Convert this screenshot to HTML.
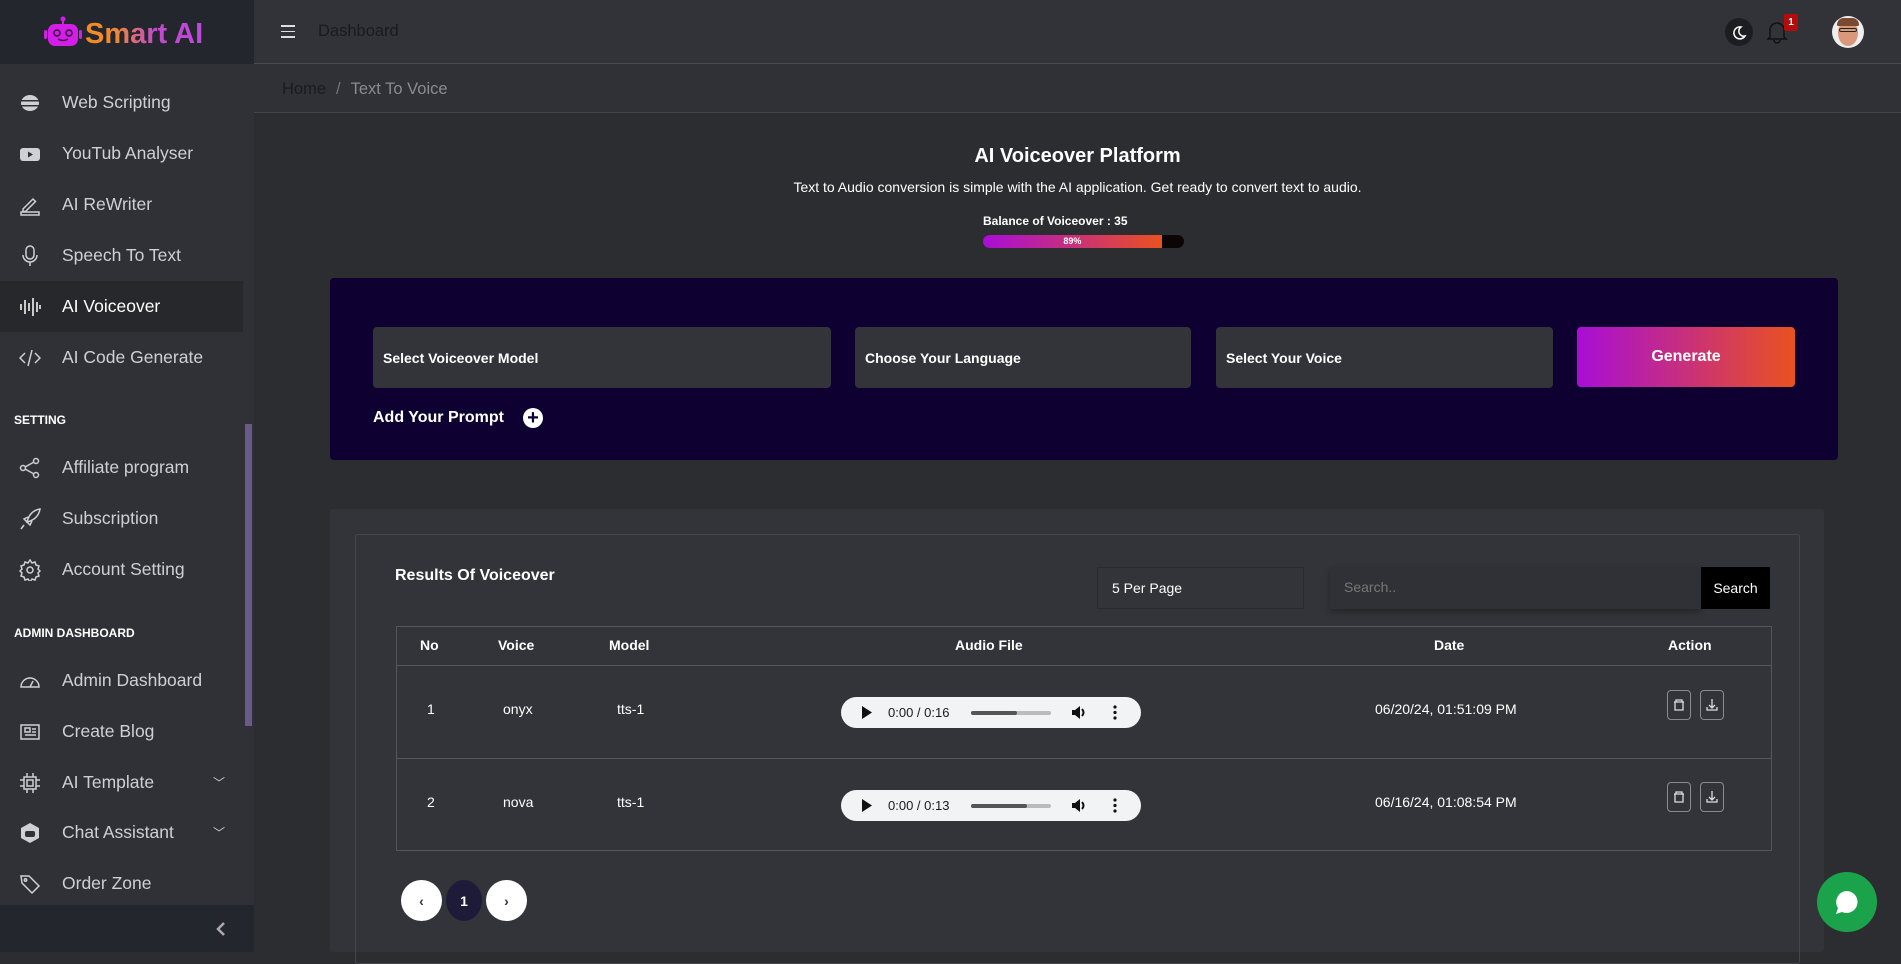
<!DOCTYPE html>
<html><head><meta charset="utf-8"><style>
*{box-sizing:border-box;margin:0;padding:0}
body{width:1901px;height:952px;overflow:hidden;background:#2c2d31;font-family:"Liberation Sans",sans-serif;color:#fff;position:relative}
.abs{position:absolute;white-space:nowrap}
.side{left:0;top:0;width:254px;height:952px;background:#303136}
.logo{left:0;top:0;width:254px;height:64px;background:#24262e}
.mi{position:absolute;left:0;width:243px;height:51px;display:flex;align-items:center;font-size:17.5px;color:#cfd0d4;white-space:nowrap}
.mi svg{position:absolute;left:19px;width:22px;height:22px}
.mi span{position:absolute;left:62px}
.sh{position:absolute;left:14px;font-size:12px;font-weight:bold;color:#fff}
.hdr{left:254px;top:0;right:0;height:64px;background:#323338;border-bottom:1px solid #4a4b50}
.bc{left:254px;top:64px;right:0;height:49px;background:#303136;border-bottom:1px solid #44454a}
.inp{position:absolute;top:327px;height:61px;background:#333439;border-radius:4px;font-size:14px;font-weight:bold;display:flex;align-items:center;padding-left:10px}
.audio{position:absolute;left:841px;width:300px;height:31px;background:#f1f3f4;border-radius:16px;color:#1a1a1a;font-size:13px}
.ab{position:absolute;width:24px;height:30px;border:1px solid #8a8b90;border-radius:4px}
.pg{position:absolute;top:880px;width:41px;height:41px;border-radius:50%;background:#fff;color:#333;display:flex;align-items:center;justify-content:center;font-size:14px;font-weight:bold}
</style></head><body>
<div class="abs side"></div>
<div class="abs logo">
<svg class="abs" style="left:43px;top:16px" width="40" height="32" viewBox="0 0 40 32"><circle cx="20" cy="3" r="2.5" fill="#d21ee6"/><rect x="19" y="3" width="2" height="6" fill="#d21ee6"/><rect x="5" y="8" width="30" height="22" rx="7" fill="#d21ee6"/><rect x="1" y="14" width="3" height="9" rx="1.5" fill="#d21ee6"/><rect x="36" y="14" width="3" height="9" rx="1.5" fill="#d21ee6"/><circle cx="14" cy="17" r="3" fill="none" stroke="#3a1040" stroke-width="1.5"/><circle cx="26" cy="17" r="3" fill="none" stroke="#3a1040" stroke-width="1.5"/><path d="M15 23q5 3 10 0" stroke="#3a1040" stroke-width="1.5" fill="none"/></svg>
<div class="abs" style="left:85px;top:18px;font-size:29px;line-height:32px;font-weight:bold;background:linear-gradient(90deg,#f68a24 0%,#f08a30 25%,#c24ad0 60%,#b94ad8 100%);-webkit-background-clip:text;background-clip:text;color:transparent">Smart AI</div>
</div>
<div class="mi" style="top:77px"><svg viewBox="0 0 22 22"><ellipse cx="11" cy="11" rx="9" ry="8" fill="#cfd0d4"/><rect x="2" y="8" width="18" height="1.5" fill="#303136"/><rect x="2" y="13" width="18" height="1.5" fill="#303136"/></svg><span>Web Scripting</span></div>
<div class="mi" style="top:128px"><svg viewBox="0 0 22 22"><rect x="1" y="5" width="20" height="13" rx="3" fill="#cfd0d4"/><path d="M9 8.5l5 3-5 3z" fill="#303136"/></svg><span>YouTub Analyser</span></div>
<div class="mi" style="top:179px"><svg viewBox="0 0 22 22" fill="none" stroke="#cfd0d4" stroke-width="1.5"><path d="M4 15l10-10 2.5 2.5-10 10H4z"/><rect x="2" y="18" width="18" height="3"/></svg><span>AI ReWriter</span></div>
<div class="mi" style="top:230px"><svg viewBox="0 0 22 22" fill="none" stroke="#cfd0d4" stroke-width="1.5"><rect x="7" y="1" width="8" height="13" rx="4"/><path d="M4 10a7 7 0 0014 0M11 17v4"/></svg><span>Speech To Text</span></div>
<div class="mi" style="top:281px;background:#27282c;color:#fff"><svg viewBox="0 0 22 22" stroke="#fff" stroke-width="1.5"><path d="M2 8v6M6 4v14M10 7v8M14 2v18M18 6v10M21 9v4"/></svg><span>AI Voiceover</span></div>
<div class="mi" style="top:332px"><svg viewBox="0 0 22 22" fill="none" stroke="#cfd0d4" stroke-width="1.5"><path d="M6 6l-5 5 5 5M16 6l5 5-5 5M13 3l-4 16"/></svg><span>AI Code Generate</span></div>
<div class="sh" style="top:413px">SETTING</div>
<div class="mi" style="top:442px"><svg viewBox="0 0 22 22" fill="none" stroke="#cfd0d4" stroke-width="1.5"><circle cx="4" cy="11" r="2.5"/><circle cx="17" cy="4" r="2.5"/><circle cx="17" cy="18" r="2.5"/><path d="M6 10l9-5M6 12l9 5"/></svg><span>Affiliate program</span></div>
<div class="mi" style="top:493px"><svg viewBox="0 0 22 22" fill="none" stroke="#cfd0d4" stroke-width="1.5"><path d="M8 14c2-8 7-12 13-13-1 6-5 11-13 13zM8 14l-3-3 4-2M8 14l3 3 2-4M5 17l-3 4"/></svg><span>Subscription</span></div>
<div class="mi" style="top:544px"><svg viewBox="0 0 22 22" fill="none" stroke="#cfd0d4" stroke-width="1.5"><circle cx="11" cy="11" r="3"/><path d="M11 1l2 3 3-1 1 3 3 1-1 3 2 2-2 2 1 3-3 1-1 3-3-1-2 3-2-3-3 1-1-3-3-1 1-3-2-2 2-2-1-3 3-1 1-3 3 1z"/></svg><span>Account Setting</span></div>
<div class="sh" style="top:626px">ADMIN DASHBOARD</div>
<div class="mi" style="top:655px"><svg viewBox="0 0 22 22" fill="none" stroke="#cfd0d4" stroke-width="1.5"><path d="M2 17a9 9 0 1118 0zM11 17l3-6"/></svg><span>Admin Dashboard</span></div>
<div class="mi" style="top:706px"><svg viewBox="0 0 22 22" fill="none" stroke="#cfd0d4" stroke-width="1.5"><rect x="2" y="4" width="18" height="14"/><rect x="6" y="7" width="5" height="4"/><path d="M13 8h4M13 11h4M6 14h11"/></svg><span>Create Blog</span></div>
<div class="mi" style="top:757px"><svg viewBox="0 0 22 22" fill="none" stroke="#cfd0d4" stroke-width="1.5"><rect x="5" y="5" width="12" height="12"/><rect x="8" y="8" width="6" height="6"/><path d="M8 1v4M14 1v4M8 17v4M14 17v4M1 8h4M1 14h4M17 8h4M17 14h4"/></svg><span>AI Template</span><span style="left:213px;font-size:12px">﹀</span></div>
<div class="mi" style="top:807px"><svg viewBox="0 0 22 22"><path d="M11 1l9 5v10l-9 5-9-5V6z" fill="#cfd0d4"/><rect x="6" y="9" width="10" height="6" rx="2" fill="#303136"/></svg><span>Chat Assistant</span><span style="left:213px;font-size:12px">﹀</span></div>
<div class="mi" style="top:858px"><svg viewBox="0 0 22 22" fill="none" stroke="#cfd0d4" stroke-width="1.5"><path d="M2 3h8l10 10-7 7L3 10z"/><circle cx="6.5" cy="7" r="1.2"/></svg><span>Order Zone</span></div>
<div class="abs" style="left:245px;top:424px;width:7px;height:302px;background:#6a5a8a"></div>
<div class="abs" style="left:0;top:905px;width:254px;height:47px;background:#24262e"><svg class="abs" style="left:214px;top:16px" width="14" height="16" viewBox="0 0 14 16"><path d="M10 2L4 8l6 6" fill="none" stroke="#aaa" stroke-width="2.5"/></svg></div>

<div class="abs hdr">
<div class="abs" style="left:27px;top:25px;width:14px"><div style="height:1.5px;background:#ddd;margin-bottom:4px"></div><div style="height:1.5px;background:#ddd;margin-bottom:4px"></div><div style="height:1.5px;background:#ddd"></div></div>
<div class="abs" style="left:64px;top:22px;font-size:16.5px;color:#1a1a22">Dashboard</div>
<div class="abs" style="left:1471px;top:18px;width:28px;height:28px;border-radius:50%;background:#1c1d20"><svg width="28" height="28" viewBox="0 0 28 28"><path d="M16 9a6 6 0 104 9 5 5 0 01-4-9z" fill="none" stroke="#fff" stroke-width="1.5"/></svg></div>
<svg class="abs" style="left:1512px;top:20px" width="22" height="24" viewBox="0 0 22 24" fill="none" stroke="#111" stroke-width="1.5"><path d="M4 17V10a7 7 0 0114 0v7l2 2H2zM8 20a3 3 0 006 0"/></svg>
<div class="abs" style="left:1530px;top:14px;width:14px;height:17px;background:#b30c0c;border-radius:2px;font-size:10px;font-weight:bold;text-align:center;line-height:17px">1</div>
<div class="abs" style="left:1578px;top:16px;width:32px;height:32px;border-radius:50%;background:#eee;overflow:hidden"><div style="position:absolute;left:6px;top:4px;width:20px;height:26px;border-radius:50%;background:#d9987a"></div><div style="position:absolute;left:5px;top:2px;width:22px;height:8px;border-radius:10px 10px 2px 2px;background:#7a4a30"></div><div style="position:absolute;left:7px;top:12px;width:18px;height:4px;border:1.5px solid #222;border-radius:2px"></div></div>
</div>
<div class="abs bc"><div class="abs" style="left:28px;top:16px;font-size:16.5px"><span style="color:#1a1a22">Home</span><span style="color:#777;margin:0 10px">/</span><span style="color:#8a8b90">Text To Voice</span></div></div>

<div class="abs" style="left:254px;right:0;top:145px;text-align:center;font-size:20px;font-weight:bold">AI Voiceover Platform</div>
<div class="abs" style="left:254px;right:0;top:179px;text-align:center;font-size:14px">Text to Audio conversion is simple with the AI application. Get ready to convert text to audio.</div>
<div class="abs" style="left:983px;top:214px;font-size:12px;font-weight:bold">Balance of Voiceover : 35</div>
<div class="abs" style="left:983px;top:235px;width:201px;height:13px;border-radius:7px;background:#0c0505;overflow:hidden"><div style="width:89%;height:100%;background:linear-gradient(90deg,#a80ed6,#e9521f);font-size:9px;font-weight:bold;text-align:center;line-height:13px">89%</div></div>

<div class="abs" style="left:330px;top:278px;width:1508px;height:182px;background:#0e0030;border-radius:4px"></div>
<div class="inp" style="left:373px;width:458px">Select Voiceover Model</div>
<div class="inp" style="left:855px;width:336px">Choose Your Language</div>
<div class="inp" style="left:1216px;width:337px">Select Your Voice</div>
<div class="abs" style="left:1577px;top:327px;width:218px;height:60px;border-radius:4px;background:linear-gradient(90deg,#a80ed6,#e9521f);font-size:16px;font-weight:bold;text-align:center;line-height:60px">Generate</div>
<div class="abs" style="left:373px;top:409px;font-size:16px;font-weight:bold">Add Your Prompt</div>
<div class="abs" style="left:523px;top:408px;width:20px;height:20px;border-radius:50%;background:#fff;color:#0e0030;font-size:20px;font-weight:bold;text-align:center;line-height:20px">+</div>

<div class="abs" style="left:330px;top:509px;width:1494px;height:443px;background:#333439;border-radius:3px"></div>
<div class="abs" style="left:355px;top:534px;width:1445px;height:430px;border:1px solid #45464b;border-radius:3px"></div>
<div class="abs" style="left:395px;top:567px;font-size:16px;font-weight:bold">Results Of Voiceover</div>
<div class="abs" style="left:1097px;top:567px;width:207px;height:42px;border:1px solid #2a2b2f;background:#333439;font-size:14px;padding:12px 14px">5 Per Page</div>
<div class="abs" style="left:1330px;top:567px;width:371px;height:42px;background:#303136;box-shadow:0 3px 6px rgba(0,0,0,.3);font-size:14px;color:#777;padding:12px 14px">Search..</div>
<div class="abs" style="left:1701px;top:567px;width:69px;height:42px;background:#000;font-size:14px;text-align:center;line-height:42px">Search</div>

<div class="abs" style="left:396px;top:626px;width:1376px;height:225px;border:1px solid #55565b"></div>
<div class="abs" style="left:396px;top:665px;width:1376px;height:1px;background:#55565b"></div>
<div class="abs" style="left:396px;top:758px;width:1376px;height:1px;background:#55565b"></div>
<div class="abs" style="top:637px;left:0;font-size:14px;font-weight:bold">
<span class="abs" style="left:420px">No</span><span class="abs" style="left:498px">Voice</span><span class="abs" style="left:609px">Model</span><span class="abs" style="left:955px">Audio File</span><span class="abs" style="left:1434px">Date</span><span class="abs" style="left:1668px">Action</span></div>
<div class="abs" style="top:701px;left:0;font-size:14px"><span class="abs" style="left:427px">1</span><span class="abs" style="left:503px">onyx</span><span class="abs" style="left:617px">tts-1</span><span class="abs" style="left:1375px">06/20/24, 01:51:09 PM</span></div>
<div class="abs" style="top:794px;left:0;font-size:14px"><span class="abs" style="left:427px">2</span><span class="abs" style="left:503px">nova</span><span class="abs" style="left:617px">tts-1</span><span class="abs" style="left:1375px">06/16/24, 01:08:54 PM</span></div>
<div class="audio" style="top:697px"><svg class="abs" style="left:20px;top:9px" width="12" height="13" viewBox="0 0 12 13"><path d="M1 0l10 6.5L1 13z" fill="#111"/></svg><span class="abs" style="left:47px;top:8px">0:00 / 0:16</span><div class="abs" style="left:130px;top:14px;width:80px;height:4px;background:#bbb;border-radius:2px"><div style="width:58%;height:100%;background:#555;border-radius:2px"></div></div><svg class="abs" style="left:230px;top:8px" width="16" height="15" viewBox="0 0 16 15"><path d="M1 5h3l5-4v13l-5-4H1z" fill="#111"/><path d="M11 4q3 3.5 0 7" stroke="#111" stroke-width="2" fill="none"/></svg><svg class="abs" style="left:272px;top:8px" width="4" height="15" viewBox="0 0 4 15"><circle cx="2" cy="2" r="1.6" fill="#111"/><circle cx="2" cy="7.5" r="1.6" fill="#111"/><circle cx="2" cy="13" r="1.6" fill="#111"/></svg></div>
<div class="audio" style="top:790px"><svg class="abs" style="left:20px;top:9px" width="12" height="13" viewBox="0 0 12 13"><path d="M1 0l10 6.5L1 13z" fill="#111"/></svg><span class="abs" style="left:47px;top:8px">0:00 / 0:13</span><div class="abs" style="left:130px;top:14px;width:80px;height:4px;background:#bbb;border-radius:2px"><div style="width:70%;height:100%;background:#555;border-radius:2px"></div></div><svg class="abs" style="left:230px;top:8px" width="16" height="15" viewBox="0 0 16 15"><path d="M1 5h3l5-4v13l-5-4H1z" fill="#111"/><path d="M11 4q3 3.5 0 7" stroke="#111" stroke-width="2" fill="none"/></svg><svg class="abs" style="left:272px;top:8px" width="4" height="15" viewBox="0 0 4 15"><circle cx="2" cy="2" r="1.6" fill="#111"/><circle cx="2" cy="7.5" r="1.6" fill="#111"/><circle cx="2" cy="13" r="1.6" fill="#111"/></svg></div>
<div class="ab" style="left:1667px;top:690px"><svg width="22" height="28" viewBox="0 0 22 28" fill="none" stroke="#ddd" stroke-width="1.3"><path d="M6 11h10M8 11V9h6v2M7 11v8h8v-8"/></svg></div>
<div class="ab" style="left:1700px;top:690px"><svg width="22" height="28" viewBox="0 0 22 28" fill="none" stroke="#ddd" stroke-width="1.3"><path d="M11 8v9M8 14l3 3 3-3M6 16v3h10v-3"/></svg></div>
<div class="ab" style="left:1667px;top:782px"><svg width="22" height="28" viewBox="0 0 22 28" fill="none" stroke="#ddd" stroke-width="1.3"><path d="M6 11h10M8 11V9h6v2M7 11v8h8v-8"/></svg></div>
<div class="ab" style="left:1700px;top:782px"><svg width="22" height="28" viewBox="0 0 22 28" fill="none" stroke="#ddd" stroke-width="1.3"><path d="M11 8v9M8 14l3 3 3-3M6 16v3h10v-3"/></svg></div>
<div class="pg" style="left:401px">‹</div>
<div class="pg" style="left:446px;width:36px;background:#1d1b38;color:#fff">1</div>
<div class="pg" style="left:486px">›</div>
<div class="abs" style="left:1817px;top:872px;width:60px;height:60px;border-radius:50%;background:#1aa34a"><svg width="60" height="60" viewBox="0 0 60 60"><path d="M30 19a11 11 0 00-9 17l-2 6 6-2a11 11 0 105-21z" fill="#fff"/></svg></div>
</body></html>
